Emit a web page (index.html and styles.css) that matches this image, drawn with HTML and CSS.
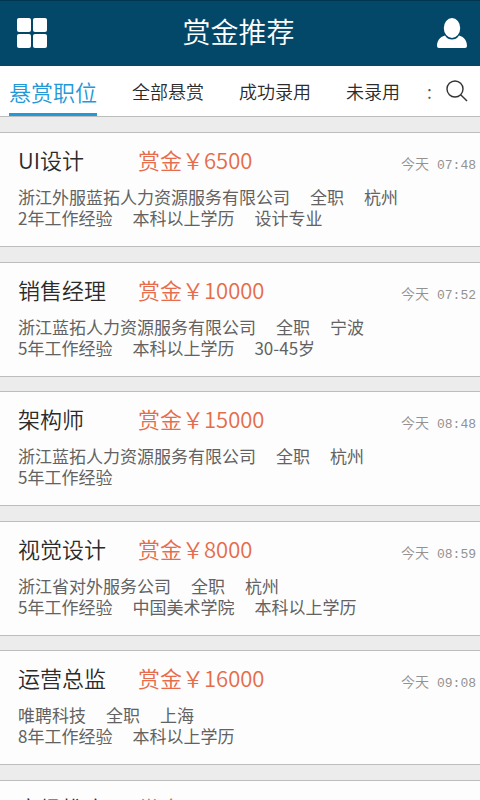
FILE: index.html
```html
<!DOCTYPE html>
<html lang="zh-CN">
<head>
<meta charset="utf-8">
<meta name="viewport" content="width=device-width, initial-scale=1">
<title>赏金推荐</title>
<link rel="stylesheet" href="styles.css">
</head>
<body>
<div class="app">
  <header class="topbar">
    <button class="icon-button" type="button" aria-label="菜单">
      <svg width="30" height="30" viewBox="0 0 30 30" fill="#fff"><rect width="14" height="14" rx="2"/><rect x="16" width="14" height="14" rx="2"/><rect y="16" width="14" height="14" rx="2"/><rect x="16" y="16" width="14" height="14" rx="2"/></svg>
    </button>
    <h1 class="topbar-title">赏金推荐</h1>
    <button class="icon-button profile" type="button" aria-label="个人中心">
      <svg width="32" height="32" viewBox="0 0 32 32" fill="#fff"><ellipse cx="16" cy="11" rx="8.200" ry="10"/><path d="M9 18.500C11 21.500 13 22.500 16 22.500S21 21.500 23 18.500C28.500 20 31 24 31 29Q31 31 29 31H3Q1 31 1 29C1 24 3.500 20 9 18.500Z"/></svg>
    </button>
  </header>
  <nav class="tabs">
    <a class="tab active" href="#">悬赏职位</a>
    <a class="tab" href="#">全部悬赏</a>
    <a class="tab" href="#">成功录用</a>
    <a class="tab" href="#">未录用</a>
    <span class="more">:</span>
    <button class="icon-button search" type="button" aria-label="搜索">
      <svg width="22" height="22" viewBox="0 0 22 22" fill="none" stroke="#333" stroke-width="1.400"><circle cx="9" cy="9" r="8"/><path d="M14.700 14.700L21 21"/></svg>
    </button>
  </nav>
  <main class="jobs">
    <article class="job">
      <div class="job-head"><h2 class="job-title">UI设计</h2><span class="reward">赏金￥6500</span><time class="time"><span>今天</span><span class="clock">07:48</span></time></div>
      <p class="meta"><span>浙江外服蓝拓人力资源服务有限公司</span><span>全职</span><span>杭州</span></p>
      <p class="meta"><span>2年工作经验</span><span>本科以上学历</span><span>设计专业</span></p>
    </article>
    <article class="job">
      <div class="job-head"><h2 class="job-title">销售经理</h2><span class="reward">赏金￥10000</span><time class="time"><span>今天</span><span class="clock">07:52</span></time></div>
      <p class="meta"><span>浙江蓝拓人力资源服务有限公司</span><span>全职</span><span>宁波</span></p>
      <p class="meta"><span>5年工作经验</span><span>本科以上学历</span><span>30-45岁</span></p>
    </article>
    <article class="job">
      <div class="job-head"><h2 class="job-title">架构师</h2><span class="reward">赏金￥15000</span><time class="time"><span>今天</span><span class="clock">08:48</span></time></div>
      <p class="meta"><span>浙江蓝拓人力资源服务有限公司</span><span>全职</span><span>杭州</span></p>
      <p class="meta"><span>5年工作经验</span></p>
    </article>
    <article class="job">
      <div class="job-head"><h2 class="job-title">视觉设计</h2><span class="reward">赏金￥8000</span><time class="time"><span>今天</span><span class="clock">08:59</span></time></div>
      <p class="meta"><span>浙江省对外服务公司</span><span>全职</span><span>杭州</span></p>
      <p class="meta"><span>5年工作经验</span><span>中国美术学院</span><span>本科以上学历</span></p>
    </article>
    <article class="job">
      <div class="job-head"><h2 class="job-title">运营总监</h2><span class="reward">赏金￥16000</span><time class="time"><span>今天</span><span class="clock">09:08</span></time></div>
      <p class="meta"><span>唯聘科技</span><span>全职</span><span>上海</span></p>
      <p class="meta"><span>8年工作经验</span><span>本科以上学历</span></p>
    </article>
    <article class="job">
      <div class="job-head"><h2 class="job-title">市场推广</h2><span class="reward">赏金</span></div>
    </article>
  </main>
</div>
</body>
</html>
```
FILE: styles.css
```css
* { box-sizing: border-box; }
body {
  margin: 0;
  background: #ececec;
  font-family: "Noto Sans CJK SC", sans-serif;
  font-weight: 350;
  color: #2b2b2b;
}
h1, h2, p { margin: 0; font-weight: inherit; }
.app { height: 100vh; overflow: hidden; }
.topbar {
  display: grid;
  grid-template-columns: 32px 1fr 32px;
  align-items: center;
  height: 66px;
  padding: 0 12px 2px 17px;
  background: #034869;
  border-top: 1px solid #023650;
}
.topbar-title {
  padding: 0 8px 4px 0;
  font-size: 28px;
  line-height: 40px;
  text-align: center;
  color: #fff;
}
.icon-button { display: flex; padding: 0; border: 0; background: none; }
.tabs {
  display: flex;
  align-items: center;
  height: 51px;
  padding: 0 12px 0 9px;
  background: #fff;
  border-bottom: 1px solid #bdbdbd;
}
.tab {
  margin-right: 35px;
  font-size: 18px;
  line-height: 50px;
  color: #2b2b2b;
  text-decoration: none;
}
.tab.active {
  align-self: stretch;
  font-size: 22px;
  color: #2499d8;
  border-bottom: 3px solid #2499d8;
}
.more { margin-left: -8px; font-size: 18px; color: #555; }
.search { margin-left: auto; }
.jobs { padding-top: 15px; }
.job {
  height: 115px;
  margin-bottom: 15px;
  padding: 10px 4px 0 18px;
  background: #fdfdfd;
  border: solid #bdbdbd;
  border-width: 1px 0;
}
.job:nth-child(even) { margin-bottom: 14px; }
.job-head {
  display: grid;
  grid-template-columns: 120px 1fr auto;
  grid-template-rows: 32px;
  align-items: center;
  margin-bottom: 11px;
  line-height: 30px;
}
.job-title, .reward { font-size: 22px; }
.reward { color: #e66c4b; }
.time {
  display: flex;
  align-items: baseline;
  gap: 8px;
  padding-top: 10px;
  font-size: 14px;
  line-height: 20px;
  color: #929292;
}
.clock { font-family: "Liberation Mono", monospace; font-size: 13px; }
.meta {
  display: flex;
  gap: 20px;
  font-size: 17px;
  font-weight: 400;
  line-height: 21px;
  color: #626262;
}
```
